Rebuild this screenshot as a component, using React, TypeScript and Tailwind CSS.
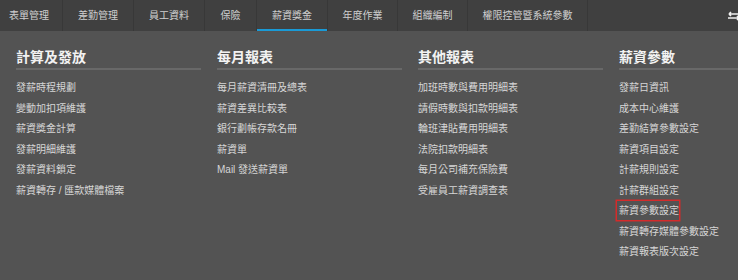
import React from 'react';

const tabs: { label: string; w: string }[] = [
  { label: '表單管理', w: 'w-[63px] pl-[9px]' },
  { label: '差勤管理', w: 'w-[71px] justify-center' },
  { label: '員工資料', w: 'w-[71px] justify-center' },
  { label: '保險', w: 'w-[52px] justify-center' },
  { label: '薪資獎金', w: 'w-[71px] justify-center' },
  { label: '年度作業', w: 'w-[70px] justify-center' },
  { label: '組織編制', w: 'w-[70px] justify-center' },
  { label: '權限控管暨系統參數', w: 'w-[120px] justify-center' },
];

const columns: { title: string; items: string[] }[] = [
  {
    title: '計算及發放',
    items: ['發薪時程規劃', '變動加扣項維護', '薪資獎金計算', '發薪明細維護', '發薪資料鎖定', '薪資轉存 / 匯款媒體檔案'],
  },
  {
    title: '每月報表',
    items: ['每月薪資清冊及總表', '薪資差異比較表', '銀行劃帳存款名冊', '薪資單', 'Mail 發送薪資單'],
  },
  {
    title: '其他報表',
    items: ['加班時數與費用明細表', '請假時數與扣款明細表', '輪班津貼費用明細表', '法院扣款明細表', '每月公司補充保險費', '受雇員工薪資調查表'],
  },
  {
    title: '薪資參數',
    items: ['發薪日資訊', '成本中心維護', '差勤結算參數設定', '薪資項目設定', '計薪規則設定', '計薪群組設定', '薪資參數設定', '薪資轉存媒體參數設定', '薪資報表版次設定'],
  },
];

const font = { fontFamily: '"Liberation Sans", "Noto Sans CJK TC", sans-serif' };

export default function App() {
  return (
    <div className="w-[738px] h-[280px] overflow-hidden bg-[#535353] flex flex-col" style={font}>
      {/* Top nav */}
      <div className="h-[31px] bg-[#404040] flex items-stretch relative">
        {tabs.map((t) => (
          <div
            key={t.label}
            className={`relative flex items-center shrink-0 text-[10px] text-[#cfcfcf] border-r border-[#383838] ${t.w}`}
          >
            {t.label}
            {t.label === '薪資獎金' && (
              <div className="absolute left-0 right-0 bottom-0 h-[2px] bg-[#1a9ad6]" />
            )}
          </div>
        ))}
        <div className="flex-1" />
        <svg className="absolute right-[-4px] top-[11px]" width="16" height="10" viewBox="0 0 16 10">
          <path d="M3 3 H14 M3 3 L5 1 M3 3 L5 5" stroke="#f0f0f0" strokeWidth="1.6" fill="none" />
          <path d="M13 7 H2 M13 7 L11 5 M13 7 L11 9" stroke="#f0f0f0" strokeWidth="1.6" fill="none" />
        </svg>
      </div>

      {/* Mega menu */}
      <div className="flex gap-[16px] pl-[16px] pt-[17px]">
        {columns.map((col) => (
          <div key={col.title} className="w-[185px] shrink-0">
            <div className="text-[14px] font-bold text-[#f2f2f2] leading-[18px] pb-[1px]">{col.title}</div>
            <div className="mt-[1px] h-[2px] bg-[#686868]" />
            <ul className="mt-[7px]">
              {col.items.map((it, i) => (
                <li
                  key={it}
                  className={`flex items-center text-[10px] text-[#d6d6d6] ${i % 2 ? 'h-[20px]' : 'h-[21px]'}`}
                >
                  {it === '薪資參數設定' ? (
                    <div className="-ml-[2px] pl-[2px] w-[62px] h-[19px] flex items-center shadow-[0_0_0_1.5px_#d42b2b]">
                      {it}
                    </div>
                  ) : (
                    <span>{it}</span>
                  )}
                </li>
              ))}
            </ul>
          </div>
        ))}
      </div>
    </div>
  );
}
